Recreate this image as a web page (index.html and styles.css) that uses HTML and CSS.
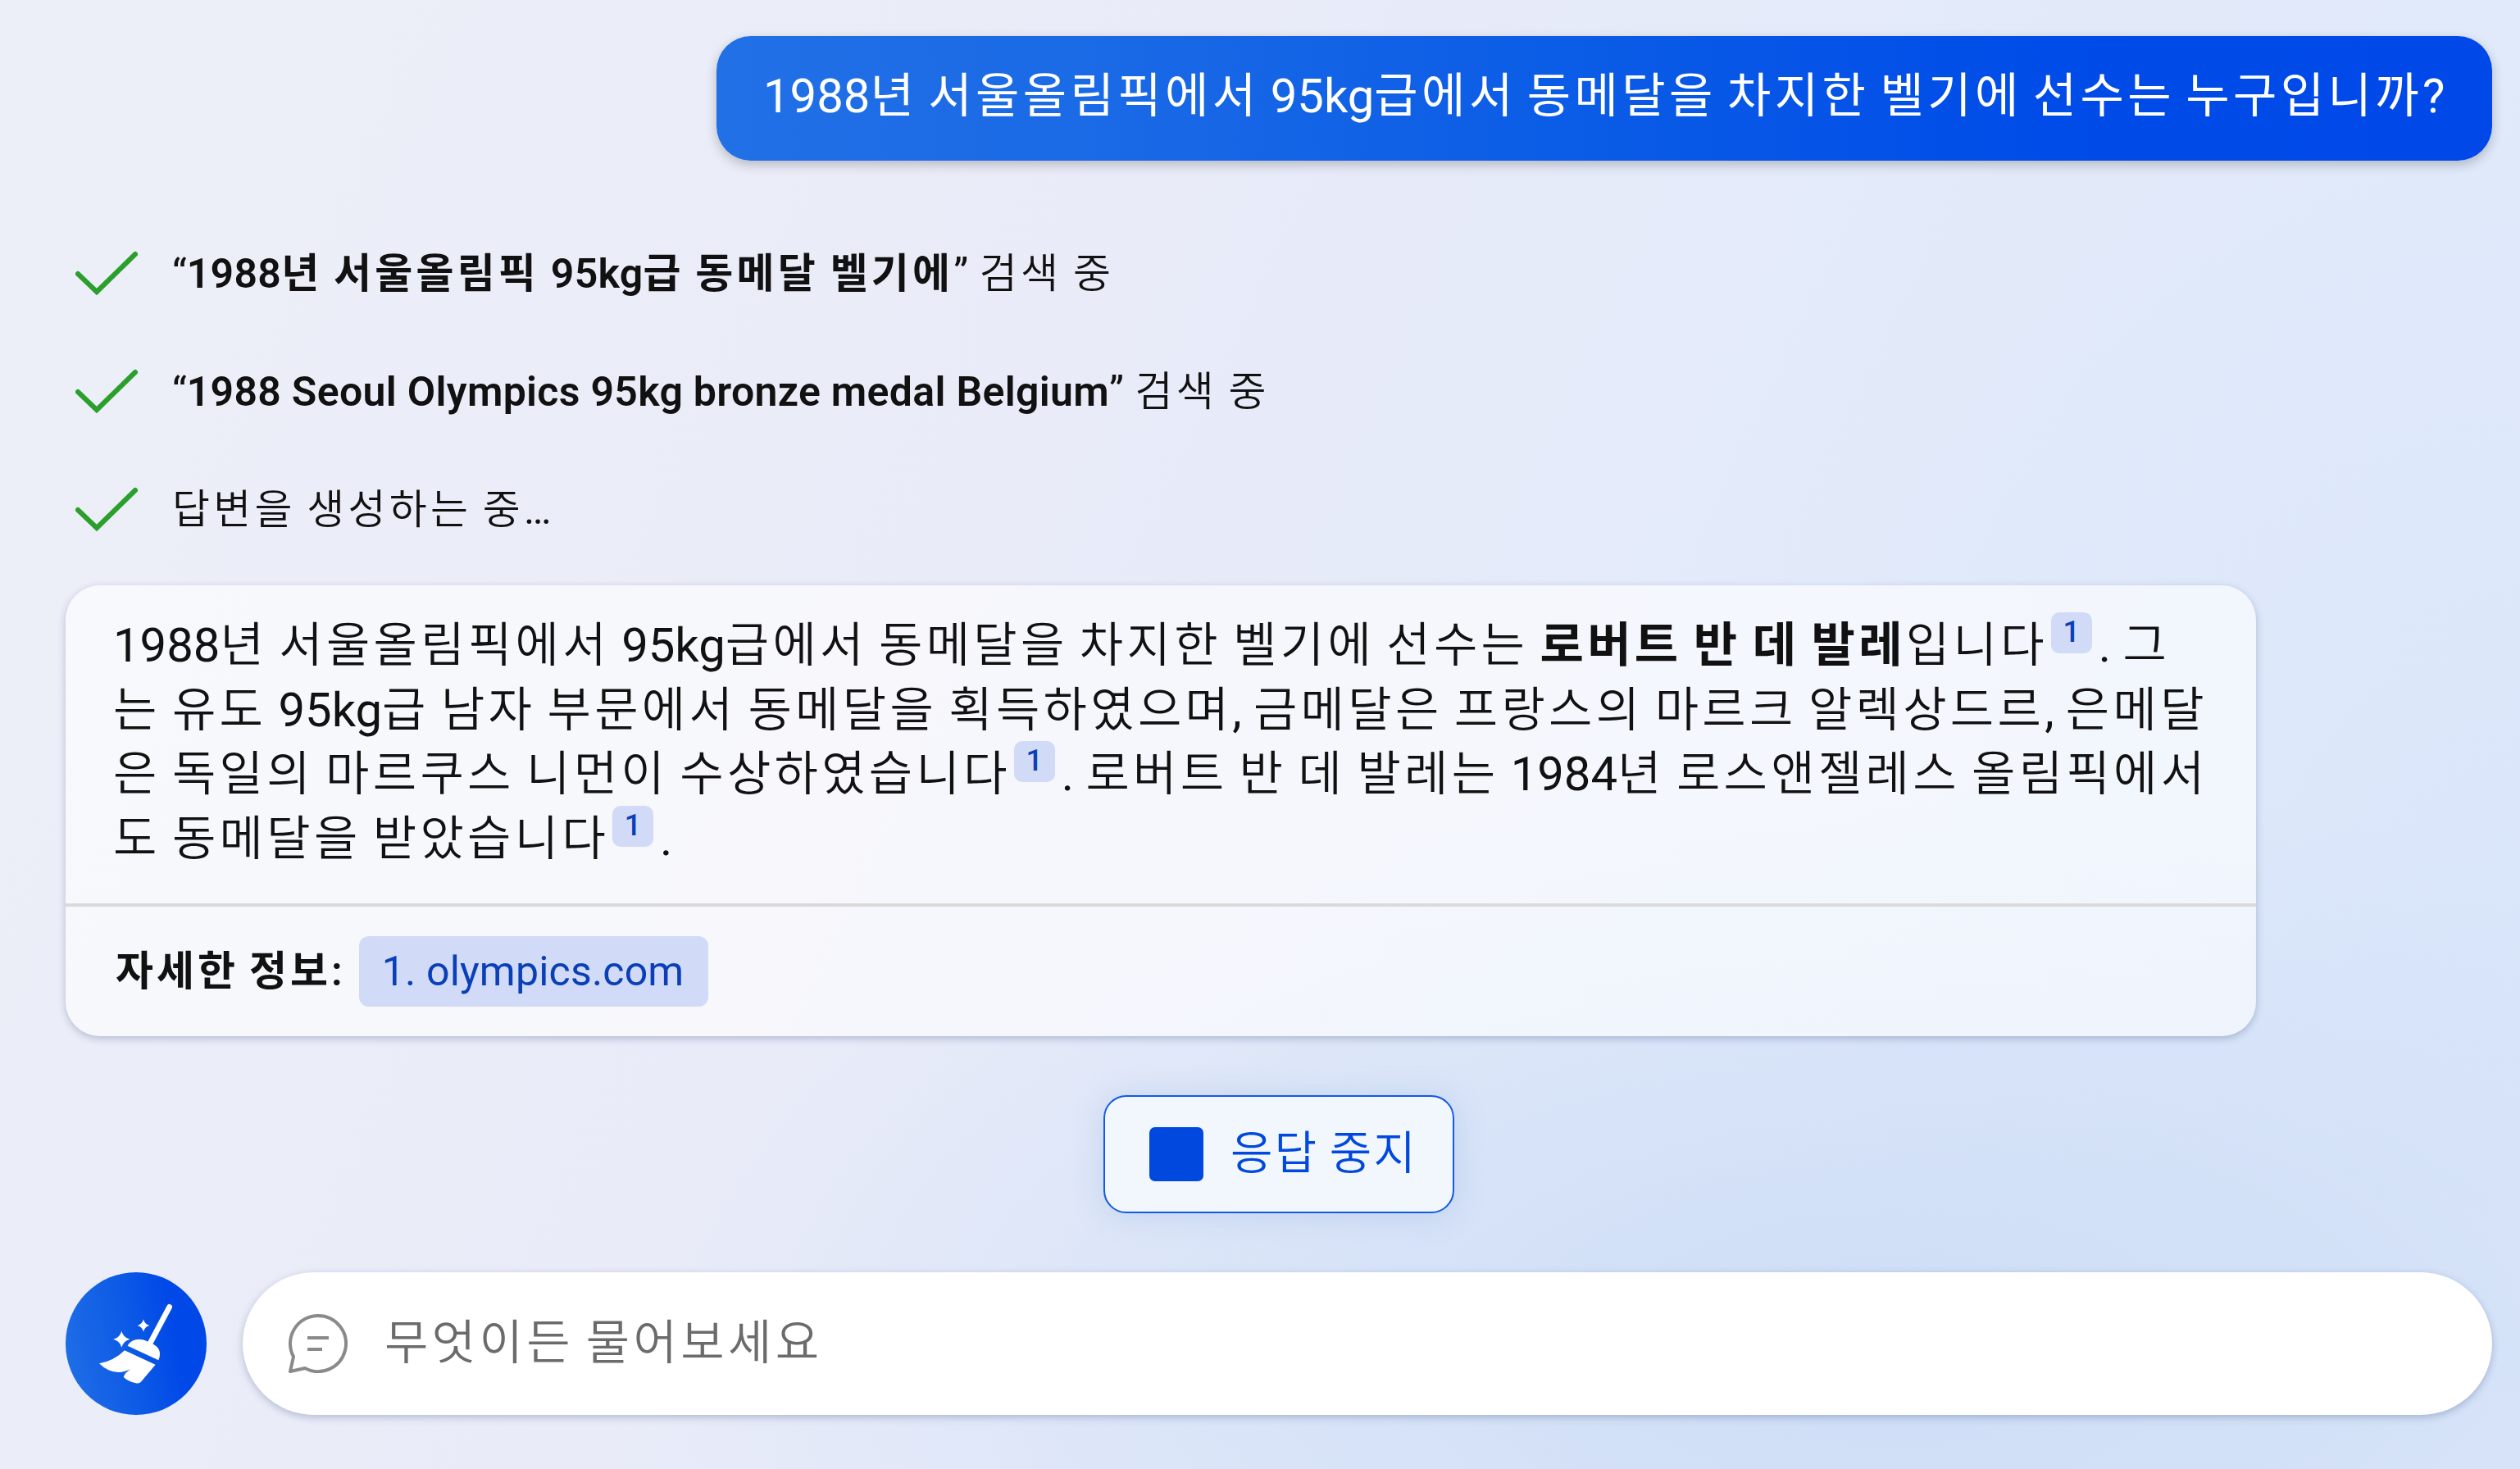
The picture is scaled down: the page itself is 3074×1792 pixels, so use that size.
FILE: index.html
```
<!DOCTYPE html>
<html lang="ko">
<head>
    <meta charset="UTF-8">
    <meta name="viewport" content="width=device-width, initial-scale=1.0">
    <title>채팅</title>
    <link rel="stylesheet" href="styles.css">
</head>
<body>
    <main class="chat">
        <div class="question"><span class="en">1988</span>년 서울올림픽에서 <span class="en">95kg</span>급에서 동메달을 차지한 벨기에 선수는 누구입니까<span class="en">?</span></div>

        <ul class="steps">
            <li>
                <svg class="check" viewBox="0 0 76 56"><path d="M3 28 L26 50 L73 4"/></svg>
                <span class="label"><span class="en">“</span><b><span class="en">1988</span>년 서울올림픽 <span class="en">95kg</span>급 동메달 벨기에</b><span class="en">”</span> 검색 중</span>
            </li>
            <li>
                <svg class="check" viewBox="0 0 76 56"><path d="M3 28 L26 50 L73 4"/></svg>
                <span class="label"><span class="en">“</span><b><span class="en">1988 Seoul Olympics 95kg bronze medal Belgium</span></b><span class="en">”</span> 검색 중</span>
            </li>
            <li>
                <svg class="check" viewBox="0 0 76 56"><path d="M3 28 L26 50 L73 4"/></svg>
                <span class="label">답변을 생성하는 중<span class="en">…</span></span>
            </li>
        </ul>

        <article class="answer">
            <p class="answer-text">
                <span class="en">1988</span>년 서울올림픽에서 <span class="en">95kg</span>급에서 동메달을 차지한 벨기에 선수는 <b>로버트 반 데 발레</b>입니다<a class="cite">1</a><span class="en">.</span> 그<br>
                는 유도 <span class="en">95kg</span>급 남자 부문에서 동메달을 획득하였으며<span class="en">,</span> 금메달은 프랑스의 마르크 알렉상드르<span class="en">,</span> 은메달<br>
                은 독일의 마르쿠스 니먼이 수상하였습니다<a class="cite">1</a><span class="en">.</span> 로버트 반 데 발레는 <span class="en">1984</span>년 로스앤젤레스 올림픽에서<br>
                도 동메달을 받았습니다<a class="cite">1</a><span class="en">.</span>
            </p>
            <footer class="sources">
                <b class="label">자세한 정보<span class="en">:</span></b>
                <a class="source">1. olympics.com</a>
            </footer>
        </article>

        <button class="stop"><span class="stop-icon"></span><span class="label">응답 중지</span></button>

        <div class="compose">
            <button class="broom">
                <svg viewBox="0 0 516 522">
                    <path class="handle" d="M380 127 L308 262"/>
                    <path d="M227 269 C240 246 268 239 297 252 L321 263 C344 275 351 296 340 322 Z"/>
                    <path d="M216 286 L329 338 L277 400 Q270 409 258 406 Q232 401 212 384 Q216 368 238 355 Q175 385 123 334 Q178 324 216 286 Z"/>
                    <path d="M205 215 Q211 239 235 245 Q211 251 205 275 Q199 251 175 245 Q199 239 205 215 Z"/>
                    <path d="M285 172 Q289 190 307 195 Q289 200 285 218 Q281 200 263 195 Q281 190 285 172 Z"/>
                </svg>
            </button>
            <div class="input">
                <svg class="bubble-icon" viewBox="0 0 72 72">
                    <path d="M36 2 A34 34 0 1 1 20 66 L2 70 L6 52 A34 34 0 0 1 36 2 Z"/>
                    <path d="M23 29 H49 M23 43 H41"/>
                </svg>
                <span class="label">무엇이든 물어보세요</span>
            </div>
        </div>
    </main>
</body>
</html>
```
FILE: styles.css
```
* {
    box-sizing: border-box;
}

body {
    margin: 0;
    font-family: "Noto Sans CJK KR", sans-serif;
    font-weight: 350;
    color: #111;
    background:
        radial-gradient(ellipse 1500px 700px at 75% 92%, #cdddf6 0%, rgba(205, 221, 246, 0) 100%),
        radial-gradient(ellipse 900px 1000px at 100% 62%, #dae6fa 0%, rgba(218, 230, 250, 0) 100%),
        linear-gradient(115deg, #edeff8 0%, #e9ebf8 38%, #e2eafa 65%, #dfe9fa 100%);
}

.chat {
    display: flex;
    flex-direction: column;
    height: 1792px;
    padding: 44px 34px 0 80px;
}

b {
    font-weight: 700;
}

/* latin runs and punctuation inside korean text */
.en {
    font-family: Roboto, sans-serif;
    font-weight: 400;
    line-height: 1;
    letter-spacing: 0;
    word-spacing: 0;
}

b .en {
    font-weight: 600;
}

.question {
    align-self: flex-end;
    width: 2166px;
    height: 152px;
    padding: 0 57px;
    border-radius: 42px;
    font-size: 58px;
    font-weight: 400;
    line-height: 136px;
    letter-spacing: 4.4px;
    word-spacing: -7.5px;
    white-space: nowrap;
    color: #fff;
    background: linear-gradient(90deg, #2170e6 0%, #1b6ae6 20%, #0b5ce6 48%, #004ce8 75%, #0048e8 100%);
    box-shadow: 0 5px 14px rgba(0, 0, 0, 0.22);
}

.steps {
    display: flex;
    flex-direction: column;
    gap: 72px;
    margin: 100px 0 0;
    padding: 0;
    list-style: none;
    font-size: 50px;
    line-height: 72px;
    letter-spacing: 4.2px;
    word-spacing: -4.5px;
}

.steps li {
    display: flex;
    align-items: center;
    height: 72px;
    padding-left: 12px;
    gap: 42px;
    white-space: nowrap;
}

.steps .label {
    padding-bottom: 7px;
}

.steps b .en {
    letter-spacing: 0.3px;
}

.check {
    width: 76px;
    height: 56px;
    margin-top: 4px;
    fill: none;
    stroke: #2b9f2b;
    stroke-width: 6;
    stroke-linecap: round;
}

.answer {
    width: 2672px;
    height: 550px;
    margin-top: 58px;
    border-radius: 42px;
    background: rgba(255, 255, 255, 0.62);
    box-shadow: 0 3px 10px rgba(40, 60, 110, 0.28);
}

.answer-text {
    height: 388px;
    margin: 0;
    padding: 29px 0 0 58px;
    font-size: 58px;
    line-height: 78.7px;
    letter-spacing: 4.3px;
    word-spacing: -6.3px;
    white-space: nowrap;
}

.cite {
    display: inline-block;
    width: 50px;
    height: 50px;
    margin: 0 8px 0 4px;
    border-radius: 10px;
    vertical-align: 24px;
    text-align: center;
    font: 500 36px/48px Roboto, sans-serif;
    letter-spacing: 0;
    color: #0a3fb8;
    background: #d1daf7;
}

.sources {
    display: flex;
    align-items: center;
    gap: 20px;
    height: 162px;
    padding-left: 61px;
    border-top: 4px solid #dadadb;
    font-size: 50px;
    letter-spacing: 4px;
    word-spacing: -5px;
}

.sources .label {
    padding-bottom: 10px;
}

.source {
    width: 426px;
    height: 86px;
    padding-left: 28px;
    border-radius: 12px;
    font: 50px/86px Roboto, sans-serif;
    letter-spacing: 0.2px;
    word-spacing: 0;
    color: #0a3fb8;
    background: #d1daf7;
}

.stop {
    display: flex;
    align-items: center;
    align-self: flex-start;
    gap: 33px;
    width: 428px;
    height: 144px;
    margin: 72px 0 0 1266px;
    padding: 0 0 0 54px;
    border: 2px solid #1259e6;
    border-radius: 28px;
    font: 350 56px/1 "Noto Sans CJK KR", sans-serif;
    letter-spacing: 2px;
    word-spacing: -4px;
    color: #0048de;
    background: #f2f7fe;
    box-shadow: 0 2px 36px rgba(130, 170, 220, 0.3);
}

.stop .label {
    padding-bottom: 12px;
}

.stop-icon {
    width: 66px;
    height: 66px;
    border-radius: 7px;
    background: #0048de;
}

.compose {
    display: flex;
    gap: 44px;
    height: 174px;
    margin-top: 72px;
}

.broom {
    width: 172px;
    height: 174px;
    padding: 0;
    border: none;
    border-radius: 50%;
    background: linear-gradient(80deg, #2170e6 0%, #0b58e6 50%, #0048e8 75%);
}

.broom svg {
    display: block;
    width: 172px;
    height: 174px;
    fill: #fff;
}

.broom .handle {
    stroke: #fff;
    stroke-width: 20;
    stroke-linecap: round;
}

.input {
    display: flex;
    align-items: center;
    flex: 1;
    gap: 45px;
    padding-left: 56px;
    border-radius: 87px;
    font-size: 58px;
    line-height: 1;
    letter-spacing: 4.4px;
    word-spacing: -6px;
    color: #6b6b6b;
    background: #fff;
    box-shadow: 0 3px 10px rgba(40, 60, 110, 0.28);
}

.input .label {
    padding-bottom: 13px;
}

.bubble-icon {
    width: 72px;
    height: 72px;
    fill: none;
    stroke: #8a8a8a;
    stroke-width: 4;
    stroke-linejoin: round;
}
```
